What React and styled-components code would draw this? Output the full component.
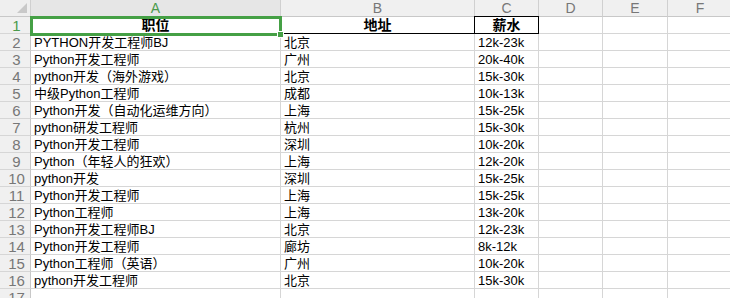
import React from 'react';
import styled, { createGlobalStyle } from 'styled-components';

const GlobalStyle = createGlobalStyle`
  html, body {
    margin: 0;
    padding: 0;
    background: #ffffff;
    overflow: hidden;
  }
  body {
    font-family: "Liberation Sans", "Noto Sans CJK SC", sans-serif;
  }
`;

const cols = ['A', 'B', 'C', 'D', 'E', 'F'];

const rows = [
  ['PYTHON开发工程师BJ', '北京', '12k-23k'],
  ['Python开发工程师', '广州', '20k-40k'],
  ['python开发（海外游戏）', '北京', '15k-30k'],
  ['中级Python工程师', '成都', '10k-13k'],
  ['Python开发（自动化运维方向）', '上海', '15k-25k'],
  ['python研发工程师', '杭州', '15k-30k'],
  ['Python开发工程师', '深圳', '10k-20k'],
  ['Python（年轻人的狂欢）', '上海', '12k-20k'],
  ['python开发', '深圳', '15k-25k'],
  ['Python开发工程师', '上海', '15k-25k'],
  ['Python工程师', '上海', '13k-20k'],
  ['Python开发工程师BJ', '北京', '12k-23k'],
  ['Python开发工程师', '廊坊', '8k-12k'],
  ['Python工程师（英语）', '广州', '10k-20k'],
  ['python开发工程师', '北京', '15k-30k'],
];

const Sheet = styled.div`
  position: relative;
  width: 730px;
  height: 298px;
  overflow: hidden;
  background: #fff;
`;

const Grid = styled.div`
  display: grid;
  grid-template-columns: 31px 250px 194px 64px 64px 65px 65px;
  grid-auto-rows: 17px;
`;

const Corner = styled.div`
  background: #efefef;
  border-right: 1px solid #d0d0d0;
  border-bottom: 1px solid #c8c8c8;
  position: relative;
  &::after {
    content: '';
    position: absolute;
    right: 3px;
    bottom: 3px;
    width: 0;
    height: 0;
    border-left: 10px solid transparent;
    border-bottom: 10px solid #c9c9c9;
  }
`;

const ColHead = styled.div`
  box-sizing: border-box;
  background: ${p => (p.$active ? '#e6e6e6' : '#f0f0f0')};
  border-right: 1px solid #d0d0d0;
  border-bottom: 1px solid #c8c8c8;
  color: ${p => (p.$active ? '#4b9a4b' : '#777')};
  font-size: 14px;
  line-height: 16px;
  text-align: center;
`;

const RowHead = styled.div`
  box-sizing: border-box;
  background: #f0f0f0;
  border-right: 1px solid #c8c8c8;
  border-bottom: 1px solid #d6d6d6;
  color: ${p => (p.$active ? '#4b9a4b' : '#777')};
  font-size: 15px;
  line-height: 17px;
  text-align: center;
  padding-left: 3px;
`;

const Cell = styled.div`
  box-sizing: border-box;
  border-right: 1px solid #d6d6d6;
  border-bottom: 1px solid #d6d6d6;
  color: #000;
  font-size: 13px;
  line-height: 17px;
  padding-left: 3px;
  white-space: nowrap;
  overflow: visible;
`;

const HeadCell = styled(Cell)`
  font-weight: bold;
  font-size: 14px;
  text-align: center;
  padding-left: 0;
  border-bottom: 1px solid #000;
  border-right: 1px solid ${p => (p.$boxed ? '#000' : '#d6d6d6')};
  border-top: ${p => (p.$boxed ? '1px solid #000' : 'none')};
  border-left: ${p => (p.$boxed ? '1px solid #000' : 'none')};
  margin-top: ${p => (p.$boxed ? '-1px' : '0')};
  margin-left: ${p => (p.$boxed ? '-1px' : '0')};
  line-height: 16px;
`;

const Selection = styled.div`
  position: absolute;
  left: 30px;
  top: 16px;
  width: 252px;
  height: 20px;
  box-sizing: border-box;
  border: 3px solid #45a045;
  pointer-events: none;
  &::after {
    content: '';
    position: absolute;
    right: -5px;
    bottom: -5px;
    width: 5px;
    height: 5px;
    background: #45a045;
    border: 1px solid #fff;
  }
`;

const Blanks = () => (
  <>
    <Cell />
    <Cell />
    <Cell />
  </>
);

export default function App() {
  return (
    <>
      <GlobalStyle />
      <Sheet>
        <Grid>
          <Corner />
          {cols.map(c => (
            <ColHead key={c} $active={c === 'A'}>{c}</ColHead>
          ))}

          <RowHead $active>1</RowHead>
          <HeadCell>职位</HeadCell>
          <HeadCell>地址</HeadCell>
          <HeadCell $boxed>薪水</HeadCell>
          <Blanks />

          {rows.map((r, i) => (
            <React.Fragment key={i}>
              <RowHead>{i + 2}</RowHead>
              <Cell>{r[0]}</Cell>
              <Cell>{r[1]}</Cell>
              <Cell>{r[2]}</Cell>
              <Blanks />
            </React.Fragment>
          ))}

          <RowHead>17</RowHead>
          <Cell />
          <Cell />
          <Cell />
          <Blanks />
        </Grid>
        <Selection />
      </Sheet>
    </>
  );
}
